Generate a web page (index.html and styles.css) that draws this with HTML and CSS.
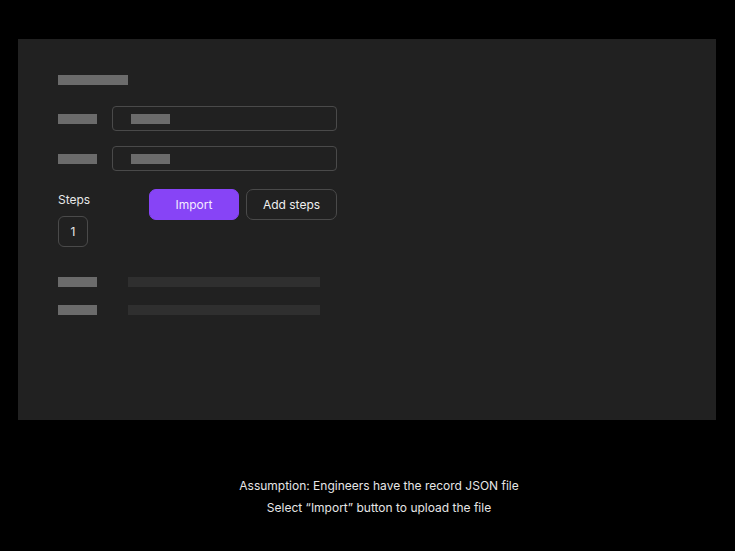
FILE: index.html
```html
<!DOCTYPE html>
<html lang="en">
<head>
<meta charset="UTF-8">
<meta name="viewport" content="width=device-width, initial-scale=1.0">
<title>Import steps</title>
<link rel="stylesheet" href="styles.css">
</head>
<body>
<div class="panel">
    <div class="bar title-bar"></div>
    <div class="field">
        <div class="bar label-bar"></div>
        <div class="input"><div class="bar value-bar"></div></div>
    </div>
    <div class="field">
        <div class="bar label-bar"></div>
        <div class="input"><div class="bar value-bar"></div></div>
    </div>
    <div class="steps-row">
        <div class="steps">
            <div class="steps-label">Steps</div>
            <div class="step-box">1</div>
        </div>
        <div class="actions">
            <button class="btn btn-primary">Import</button>
            <button class="btn btn-outline">Add steps</button>
        </div>
    </div>
    <div class="list">
        <div class="list-row">
            <div class="bar label-bar"></div>
            <div class="bar line-bar"></div>
        </div>
        <div class="list-row">
            <div class="bar label-bar"></div>
            <div class="bar line-bar"></div>
        </div>
    </div>
</div>
<div class="caption">
    <p>Assumption: Engineers have the record JSON file</p>
    <p>Select “Import” button to upload the file</p>
</div>
</body>
</html>
```

FILE: styles.css
```css
body {
    margin: 0;
    background: #000000;
    font-family: Inter, "Noto Sans", sans-serif;
    color: #e8e8e8;
}
.panel {
    box-sizing: border-box;
    width: 698px;
    height: 381px;
    margin: 39px 0 0 18px;
    padding: 36px 40px;
    background: #212121;
}
.bar {
    height: 10px;
    background: #6b6b6b;
}
.title-bar {
    width: 70px;
    margin-bottom: 21px;
}
.field {
    display: flex;
    align-items: center;
    gap: 15px;
    margin-bottom: 15px;
}
.label-bar {
    width: 39px;
}
.input {
    box-sizing: border-box;
    width: 225px;
    height: 25px;
    padding-left: 18px;
    border: 1px solid #4a4a4a;
    border-radius: 4px;
    display: flex;
    align-items: center;
}
.value-bar {
    width: 39px;
}
.steps-row {
    display: flex;
    margin-top: 18px;
}
.steps {
    width: 91px;
}
.steps-label {
    font-size: 12px;
    line-height: 22px;
    margin-bottom: 5px;
}
.step-box {
    box-sizing: border-box;
    width: 30px;
    height: 31px;
    border: 1px solid #4a4a4a;
    border-radius: 6px;
    display: flex;
    align-items: center;
    justify-content: center;
    font-size: 12px;
}
.actions {
    display: flex;
    gap: 7px;
    align-items: flex-start;
}
.btn {
    box-sizing: border-box;
    height: 31px;
    border-radius: 7px;
    font-family: Inter, "Noto Sans", sans-serif;
    font-size: 12px;
    color: #f0f0f0;
    cursor: pointer;
}
.btn-primary {
    width: 90px;
    background: #8744f6;
    border: 1px solid #8744f6;
    color: #f4ecff;
}
.btn-outline {
    width: 91px;
    background: transparent;
    border: 1px solid #4a4a4a;
}
.list {
    margin-top: 30px;
}
.list-row {
    display: flex;
    gap: 31px;
    margin-bottom: 18px;
}
.line-bar {
    width: 192px;
    background: #2f2f2f;
}
.caption {
    margin-top: 55px;
    padding-left: 23px;
    text-align: center;
    font-size: 12px;
    line-height: 22px;
    color: #e6e6e6;
}
.caption p {
    margin: 0;
}
```
